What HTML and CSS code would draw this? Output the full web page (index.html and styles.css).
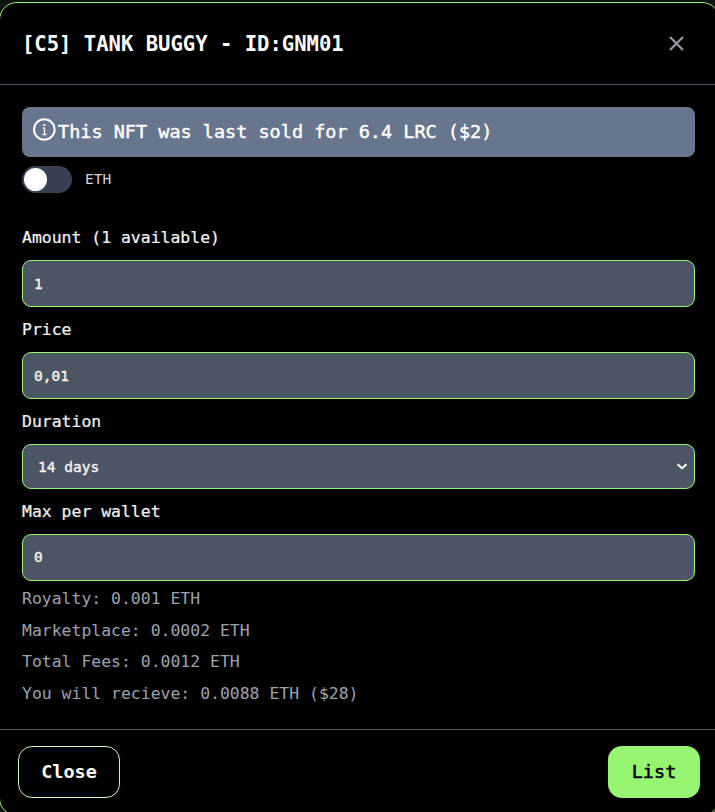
FILE: index.html
```html
<!DOCTYPE html>
<html lang="en">
<head>
<meta charset="utf-8">
<title>List NFT</title>
<link rel="stylesheet" href="styles.css">
</head>
<body>
<div class="modal">
  <header class="header">
    <h1 class="title">[C5] TANK BUGGY - ID:GNM01</h1>
    <svg class="dismiss" width="15" height="15" viewBox="0 0 15 15"><path d="M1 1 14 14M14 1 1 14" fill="none" stroke="#9ca3af" stroke-width="1.9"/></svg>
  </header>
  <main class="content">
    <div class="alert">
      <svg class="info" width="24" height="24" viewBox="0 0 24 24" fill="none" stroke="#fff"><circle cx="12.3" cy="11.5" r="10.3" stroke-width="2"/><path d="M10.7 10.2h1.8V16.5M10.5 16.5h4" stroke-width="1.3"/><path d="M11.4 7h2" stroke-width="2"/></svg>
      <span>This NFT was last sold for 6.4 LRC ($2)</span>
    </div>
    <div class="switch-row"><span class="switch"><span class="knob"></span></span><span class="currency">ETH</span></div>
    <label class="label">Amount (1 available)</label>
    <div class="field">1</div>
    <label class="label">Price</label>
    <div class="field">0,01</div>
    <label class="label">Duration</label>
    <div class="field select"><span>14 days</span><svg width="12" height="8" viewBox="0 0 12 8"><path d="M1.5 1.2 6 5.2 10.5 1.2" fill="none" stroke="#fff" stroke-width="2"/></svg></div>
    <label class="label">Max per wallet</label>
    <div class="field last">0</div>
    <div class="fees">
      <p>Royalty: 0.001 ETH</p>
      <p>Marketplace: 0.0002 ETH</p>
      <p>Total Fees: 0.0012 ETH</p>
      <p>You will recieve: 0.0088 ETH ($28)</p>
    </div>
  </main>
  <footer class="footer">
    <button class="btn close">Close</button>
    <button class="btn list">List</button>
  </footer>
</div>
</body>
</html>
```
FILE: styles.css
```css
* { box-sizing: border-box; }
html { overflow: hidden; background: #0e1510; }
body {
  margin: 0;
  height: 812px;
  overflow: hidden;
  font-family: "DejaVu Sans Mono", "Liberation Mono", monospace;
  font-size: 16.45px;
  color: #f3f4f6;
}
.modal {
  width: 721px;
  height: 814px;
  margin: 2px 0 0 -1px;
  border: 1px solid #98f572;
  border-radius: 18px;
  background: #000;
  display: flex;
  flex-direction: column;
}
.header {
  height: 82px;
  border-bottom: 1px solid #475569;
  padding: 0 35px 0 22px;
  display: flex;
  align-items: center;
  justify-content: space-between;
}
.title { margin: 0; font-size: 20.55px; line-height: 28px; color: #fff; white-space: pre; }
.dismiss { display: block; }
.content { height: 644px; padding: 22px 24px 0 22px; display: flex; flex-direction: column; }
.alert {
  height: 50px;
  flex: none;
  border-radius: 8px;
  background: #68768d;
  color: #fff;
  font-size: 18.5px;
  line-height: 50px;
  padding-left: 10px;
  display: flex;
  gap: 2px;
  white-space: pre;
  -webkit-text-stroke: 0.4px;
}
.info { margin-top: 11px; }
.switch-row { height: 27px; margin: 9px 0 31px; display: flex; align-items: center; gap: 13px; flex: none; }
.switch { width: 50px; height: 27px; border-radius: 14px; background: #374151; padding: 2px; }
.knob { display: block; width: 23px; height: 23px; border-radius: 50%; background: #fff; }
.currency { font-size: 14.5px; color: #d1d5db; padding-bottom: 2px; }
.label { height: 27px; line-height: 27px; margin-bottom: 9px; flex: none; -webkit-text-stroke: 0.2px; }
.field {
  height: 47px;
  flex: none;
  border: 1px solid #98f572;
  border-radius: 9px;
  background: #4b5563;
  padding: 0 11px;
  margin-bottom: 9px;
  font-size: 14.5px;
  line-height: 46px;
  -webkit-text-stroke: 0.4px;
}
.select { height: 45px; padding: 0 6px 0 15px; line-height: 44px; display: flex; align-items: center; justify-content: space-between; }
.last { line-height: 44px; }
.fees { margin-top: -7px; color: #9ca3af; }
.fees p { margin: 0; height: 31.5px; line-height: 31.5px; }
.footer {
  height: 86px;
  border-top: 1px solid #475569;
  padding: 16px 19px 0 18px;
  display: flex;
  justify-content: space-between;
}
.btn { height: 52px; border-radius: 14px; font-family: inherit; font-size: 18.5px; padding: 0 0 2px; }
.close { width: 102px; border: 1px solid #c9fcb4; background: #000; color: #fff; font-weight: 700; }
.list { width: 92px; border: 0; background: #98f572; color: #000; -webkit-text-stroke: 0.5px; }
```
